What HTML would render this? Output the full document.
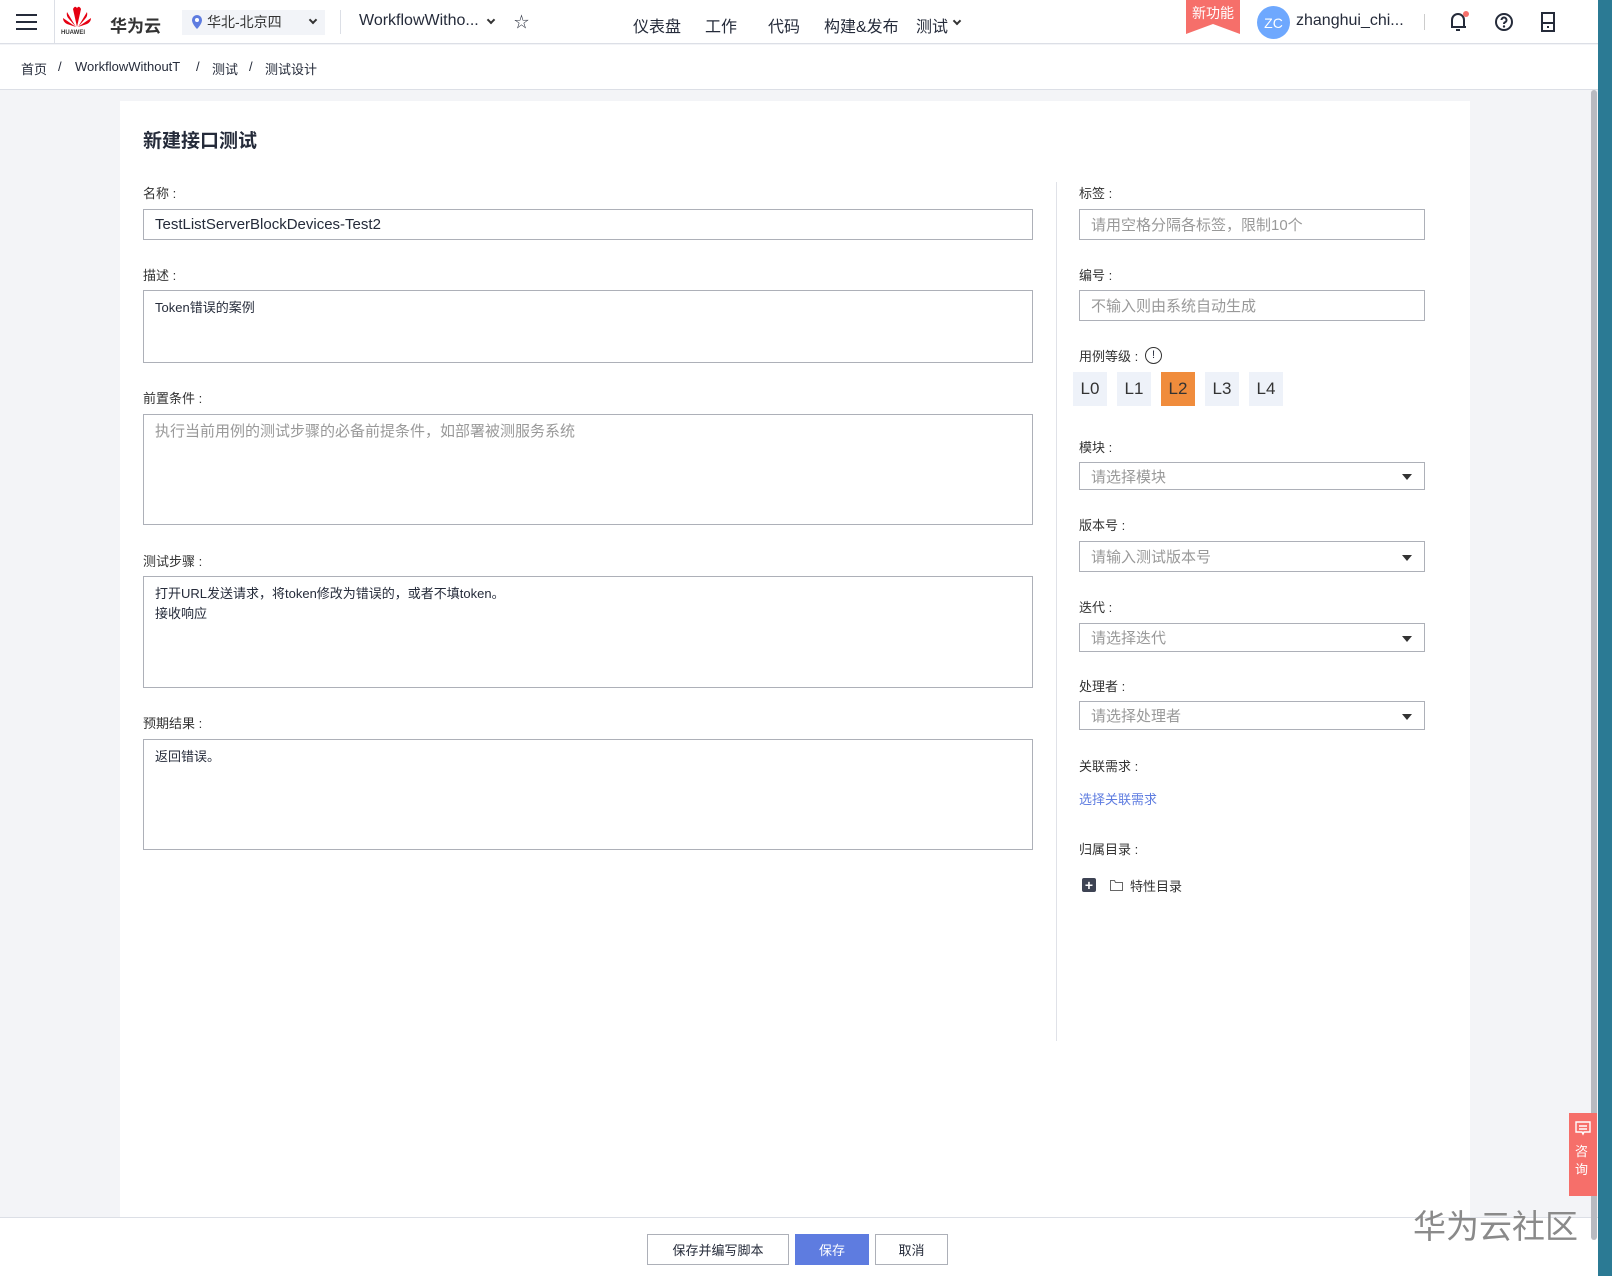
<!DOCTYPE html>
<html><head><meta charset="utf-8"><style>
*{box-sizing:border-box;margin:0;padding:0}
body{width:1612px;height:1276px;position:relative;overflow:hidden;background:#f3f4f7;font-family:"Liberation Sans","Noto Sans CJK SC",sans-serif;color:#252b3a}
.a{position:absolute}
.lbl{position:absolute;font-size:13px;color:#333}
.in{position:absolute;border:1px solid #adb0b8;background:#fff;font-size:15px;padding:0 11px;display:flex;align-items:center;color:#252b3a}
.ta{position:absolute;border:1px solid #adb0b8;background:#fff;font-size:13px;padding:7px 11px;line-height:20px;color:#252b3a}
.ph{color:#999}
.sel::after{content:"";position:absolute;right:12px;top:50%;margin-top:-2px;border:5px solid transparent;border-top:6px solid #333;border-bottom:0}
.lv{position:absolute;top:372px;width:34px;height:34px;background:#eef2f9;font-size:17px;display:flex;align-items:center;justify-content:center;color:#333}
.nav{position:absolute;top:13px;font-size:16px;color:#252b3a}
.btn{position:absolute;top:1234px;height:31px;border:1px solid #adb0b8;background:#fff;font-size:13px;display:flex;align-items:center;justify-content:center;color:#252b3a}
</style></head><body>
<div class="a" style="left:0;top:0;width:1598px;height:44px;background:#fff;border-bottom:1px solid #dcdfe6"></div>
<div class="a" style="left:16px;top:14px;width:21px;height:2px;background:#252b3a;box-shadow:0 7px 0 #252b3a,0 14px 0 #252b3a"></div>
<div class="a" style="left:54px;top:0;width:1px;height:44px;background:#dcdfe6"></div>
<svg class="a" style="left:61px;top:5px" width="32" height="24" viewBox="0 0 32 24"><g fill="#e60012"><path d="M16 22 L12 4 Q14 0 16 3 Z"/><path d="M16 22 L20 4 Q18 0 16 3 Z"/><path d="M15 22 L6 7 Q5 11 8 14 Z"/><path d="M17 22 L26 7 Q27 11 24 14 Z"/><path d="M15 22 L2 13 Q2 17 6 19 Z"/><path d="M17 22 L30 13 Q30 17 26 19 Z"/></g></svg>
<div class="a" style="left:61px;top:30px;font-size:6px;font-weight:bold;color:#333">HUAWEI</div>
<div class="a" style="left:110px;top:12px;font-size:17px;font-weight:bold;color:#333">华为云</div>
<div class="a" style="left:182px;top:10px;width:143px;height:25px;background:#f2f4f8"></div>
<svg class="a" style="left:192px;top:15px" width="10" height="14" viewBox="0 0 10 14"><path d="M5 0a5 5 0 0 1 5 5c0 4-5 9-5 9S0 9 0 5a5 5 0 0 1 5-5z" fill="#5e7ce0"/><circle cx="5" cy="5" r="2" fill="#fff"/></svg>
<div class="a" style="left:207px;top:12px;font-size:14px;color:#333">华北-北京四</div>
<div class="a" style="left:310px;top:17px;width:6px;height:6px;border-right:2px solid #333;border-bottom:2px solid #333;transform:rotate(45deg)"></div>
<div class="a" style="left:340px;top:10px;width:1px;height:24px;background:#dcdfe6"></div>
<div class="a" style="left:359px;top:12px;font-size:16px">WorkflowWitho...</div>
<div class="a" style="left:488px;top:17px;width:6px;height:6px;border-right:2px solid #333;border-bottom:2px solid #333;transform:rotate(45deg)"></div>
<div class="a" style="left:514px;top:11px;font-size:15px">☆</div>
<div class="nav" style="left:633px">仪表盘</div>
<div class="nav" style="left:705px">工作</div>
<div class="nav" style="left:768px">代码</div>
<div class="nav" style="left:824px">构建&amp;发布</div>
<div class="nav" style="left:916px">测试</div>
<div class="a" style="left:954px;top:18px;width:6px;height:6px;border-right:2px solid #333;border-bottom:2px solid #333;transform:rotate(45deg)"></div>
<svg class="a" style="left:1186px;top:0" width="54" height="34" viewBox="0 0 54 34"><path d="M0 0H54V34L27 24L0 34Z" fill="#f66f6a"/></svg>
<div class="a" style="left:1192px;top:3px;font-size:14px;color:#fff">新功能</div>
<div class="a" style="left:1257px;top:6px;width:33px;height:33px;border-radius:50%;background:#6ea8fe;color:#fff;font-size:14px;display:flex;align-items:center;justify-content:center">ZC</div>
<div class="a" style="left:1296px;top:12px;font-size:16px">zhanghui_chi...</div>
<div class="a" style="left:1424px;top:14px;width:1px;height:16px;background:#ccc"></div>
<svg class="a" style="left:1448px;top:10px" width="22" height="24" viewBox="0 0 22 24"><path d="M4 17V10a6 6 0 0 1 12 0v7H3h15" fill="none" stroke="#252b3a" stroke-width="2"/><path d="M8 20h4" stroke="#252b3a" stroke-width="2"/><circle cx="18" cy="4" r="3" fill="#f66f6a"/></svg>
<svg class="a" style="left:1494px;top:12px" width="20" height="20" viewBox="0 0 20 20"><circle cx="10" cy="10" r="8" fill="none" stroke="#252b3a" stroke-width="2"/><path d="M7.5 8a2.5 2.5 0 1 1 3.5 2.3c-.7.3-1 .8-1 1.7" fill="none" stroke="#252b3a" stroke-width="2"/><circle cx="10" cy="14.5" r="1.2" fill="#252b3a"/></svg>
<svg class="a" style="left:1541px;top:12px" width="14" height="20" viewBox="0 0 14 20"><rect x="1" y="1" width="12" height="18" fill="none" stroke="#252b3a" stroke-width="2"/><path d="M1 11h12M6 15h2" stroke="#252b3a" stroke-width="2"/></svg>
<div class="a" style="left:0;top:45px;width:1598px;height:45px;background:#fff;border-bottom:1px solid #dcdfe6"></div>
<div class="a" style="left:21px;top:59px;font-size:13px;color:#252b3a">首页</div>
<div class="a" style="left:58px;top:59px;font-size:13px">/</div>
<div class="a" style="left:75px;top:59px;font-size:13px">WorkflowWithoutT</div>
<div class="a" style="left:196px;top:59px;font-size:13px">/</div>
<div class="a" style="left:212px;top:59px;font-size:13px">测试</div>
<div class="a" style="left:249px;top:59px;font-size:13px">/</div>
<div class="a" style="left:265px;top:59px;font-size:13px">测试设计</div>
<div class="a" style="left:120px;top:101px;width:1350px;height:1116px;background:#fff"></div>
<div class="a" style="left:143px;top:126px;font-size:19px;font-weight:bold;color:#252b3a">新建接口测试</div>
<div class="lbl" style="left:143px;top:183px">名称 :</div>
<div class="in" style="left:143px;top:209px;width:890px;height:31px">TestListServerBlockDevices-Test2</div>
<div class="lbl" style="left:143px;top:265px">描述 :</div>
<div class="ta" style="left:143px;top:290px;width:890px;height:73px">Token错误的案例</div>
<div class="lbl" style="left:143px;top:388px">前置条件 :</div>
<div class="ta ph" style="left:143px;top:414px;width:890px;height:111px;font-size:15px">执行当前用例的测试步骤的必备前提条件，如部署被测服务系统</div>
<div class="lbl" style="left:143px;top:551px">测试步骤 :</div>
<div class="ta" style="left:143px;top:576px;width:890px;height:112px">打开URL发送请求，将token修改为错误的，或者不填token。<br>接收响应</div>
<div class="lbl" style="left:143px;top:713px">预期结果 :</div>
<div class="ta" style="left:143px;top:739px;width:890px;height:111px">返回错误。</div>
<div class="a" style="left:1056px;top:182px;width:1px;height:859px;background:#e0e2e8"></div>
<div class="lbl" style="left:1079px;top:183px">标签 :</div>
<div class="in ph" style="left:1079px;top:209px;width:346px;height:31px">请用空格分隔各标签，限制10个</div>
<div class="lbl" style="left:1079px;top:265px">编号 :</div>
<div class="in ph" style="left:1079px;top:290px;width:346px;height:31px">不输入则由系统自动生成</div>
<div class="lbl" style="left:1079px;top:346px">用例等级 :</div>
<div class="a" style="left:1145px;top:347px;width:17px;height:17px;border:1px solid #333;border-radius:50%;font-size:11px;text-align:center;line-height:15px">!</div>
<div class="lv" style="left:1073px">L0</div>
<div class="lv" style="left:1117px">L1</div>
<div class="lv" style="left:1161px;background:#f08c3c">L2</div>
<div class="lv" style="left:1205px">L3</div>
<div class="lv" style="left:1249px">L4</div>
<div class="lbl" style="left:1079px;top:437px">模块 :</div>
<div class="in ph sel" style="left:1079px;top:462px;width:346px;height:28px">请选择模块</div>
<div class="lbl" style="left:1079px;top:515px">版本号 :</div>
<div class="in ph sel" style="left:1079px;top:541px;width:346px;height:31px">请输入测试版本号</div>
<div class="lbl" style="left:1079px;top:597px">迭代 :</div>
<div class="in ph sel" style="left:1079px;top:623px;width:346px;height:29px">请选择迭代</div>
<div class="lbl" style="left:1079px;top:676px">处理者 :</div>
<div class="in ph sel" style="left:1079px;top:701px;width:346px;height:29px">请选择处理者</div>
<div class="lbl" style="left:1079px;top:756px">关联需求 :</div>
<div class="lbl" style="left:1079px;top:789px;color:#5e7ce0">选择关联需求</div>
<div class="lbl" style="left:1079px;top:839px">归属目录 :</div>
<div class="a" style="left:1082px;top:878px;width:14px;height:14px;background:#3d4353;border-radius:2px;color:#fff;font-size:14px;font-weight:bold;line-height:14px;text-align:center">+</div>
<svg class="a" style="left:1110px;top:880px" width="13" height="11" viewBox="0 0 13 11"><path d="M.5 .5h4l1 2h7v8H.5z" fill="none" stroke="#666"/></svg>
<div class="lbl" style="left:1130px;top:876px">特性目录</div>
<div class="a" style="left:0;top:1217px;width:1598px;height:59px;background:#fff;border-top:1px solid #dcdfe6"></div>
<div class="btn" style="left:647px;width:142px">保存并编写脚本</div>
<div class="btn" style="left:795px;width:74px;background:#5e7ce0;border-color:#5e7ce0;color:#fff">保存</div>
<div class="btn" style="left:875px;width:73px">取消</div>
<div class="a" style="left:1413px;top:1200px;font-size:33px;color:#8a8a8a">华为云社区</div>
<div class="a" style="left:1591px;top:90px;width:6px;height:1150px;background:#b8bac0;border-radius:3px"></div>
<div class="a" style="left:1598px;top:0;width:14px;height:1276px;background:#2b7a94"></div>
<div class="a" style="left:1569px;top:1113px;width:28px;height:83px;background:#f66f6a"></div>
<svg class="a" style="left:1575px;top:1121px" width="16" height="16" viewBox="0 0 16 16"><path d="M1 1h14v10H9l-1 2-1-2H1z M4 5h8M4 8h8" fill="none" stroke="#fff" stroke-width="1.4"/></svg>
<div class="a" style="left:1575px;top:1143px;font-size:13px;color:#fff;line-height:18px">咨<br>询</div>
</body></html>
